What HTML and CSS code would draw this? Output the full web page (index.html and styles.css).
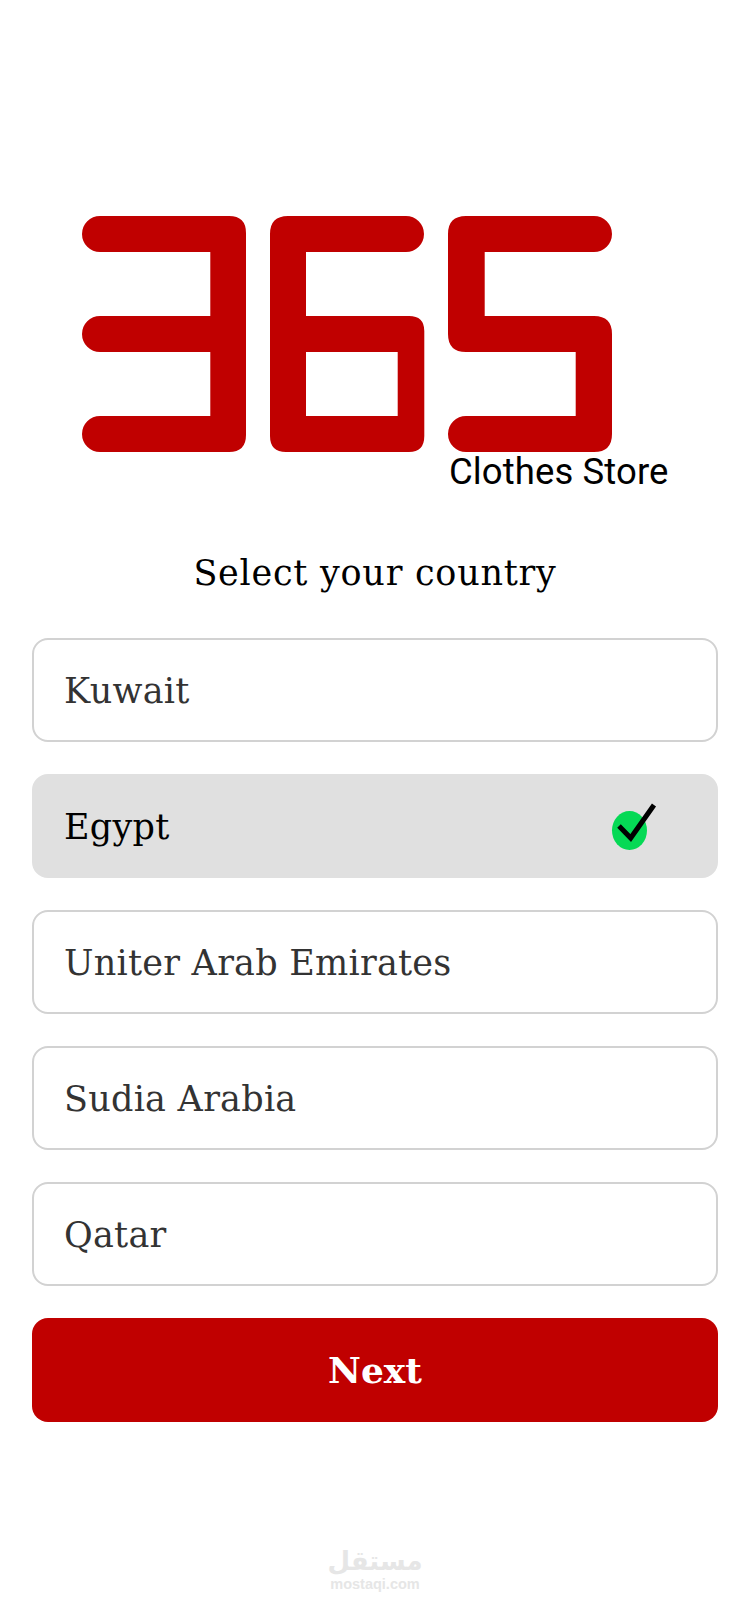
FILE: index.html
```html
<!DOCTYPE html>
<html lang="en">
<head>
<meta charset="utf-8">
<title>Select your country</title>
<link rel="stylesheet" href="styles.css">
</head>
<body>
<main class="page">
  <header class="brand">
    <svg class="logo" viewBox="82 216 530 236" aria-hidden="true">
      <path class="logo-ink" d="M100 216H229Q246 216 246 233V435Q246 452 229 452H100A18 18 0 0 1 100 416H210.3V352H100A18 18 0 0 1 100 316H210.3V252H100A18 18 0 0 1 100 216Z"/>
      <path class="logo-ink" d="M288 216H406A18 18 0 0 1 406 252H306V316H409Q424.3 316 424.3 331V436Q424.3 452 409 452H286Q270 452 270 436V234Q270 216 288 216ZM306 352V416H397.7V352Z"/>
      <path class="logo-ink" d="M466 216H594A18 18 0 0 1 594 252H484.7V316H594Q612 316 612 334V434Q612 452 594 452H466A18 18 0 0 1 466 416H575.7V352H466Q448 352 448 334V234Q448 216 466 216Z"/>
    </svg>
    <p class="tagline">Clothes Store</p>
  </header>
  <h1 class="title">Select your country</h1>
  <ul class="countries">
    <li class="country">Kuwait</li>
    <li class="country country-selected">Egypt
      <svg class="check" viewBox="0 0 44 44" aria-hidden="true">
        <ellipse class="check-dot" cx="17.5" cy="25.5" rx="17.5" ry="19.5"/>
        <path class="check-mark" d="M7 21 18.7 33 42 0"/>
      </svg>
    </li>
    <li class="country">Uniter Arab Emirates</li>
    <li class="country">Sudia Arabia</li>
    <li class="country">Qatar</li>
  </ul>
  <button class="next" type="button">Next</button>
</main>
<div class="watermark">
  <span class="watermark-ar" lang="ar" dir="rtl">مستقل</span>
  <span class="watermark-en">mostaqi.com</span>
</div>
</body>
</html>
```
FILE: styles.css
```css
* { box-sizing: border-box; }
html, body { margin: 0; padding: 0; }
body {
  width: 750px;
  height: 1624px;
  background: #fff;
  position: relative;
  overflow: hidden;
  font-family: "DejaVu Serif", serif;
}
.page { padding: 216px 32px 0; }
.brand { display: flex; flex-direction: column; align-items: flex-start; }
.logo { display: block; width: 530px; height: 236px; margin-left: 50px; }
.logo-ink { fill: #c00000; fill-rule: evenodd; }
.tagline {
  margin: 1px 0 0 417px;
  font: 400 36.5px/38px Roboto, sans-serif;
  letter-spacing: 0.1px;
  color: #000;
  white-space: nowrap;
}
.title {
  margin: 60px 0 43px;
  text-align: center;
  font-weight: 400;
  font-size: 35px;
  line-height: 44px;
  letter-spacing: 0.75px;
  color: #000;
}
.countries {
  list-style: none;
  margin: 0;
  padding: 0;
  display: flex;
  flex-direction: column;
  gap: 32px;
}
.country {
  height: 104px;
  display: flex;
  align-items: center;
  justify-content: space-between;
  padding: 2px 60px 0 30px;
  border: 2px solid #d2d2d2;
  border-radius: 16px;
  font-size: 35px;
  letter-spacing: 0.25px;
  color: #333;
}
.country-selected { background: #e0e0e0; border-color: #e0e0e0; color: #000; }
.check { width: 44px; height: 44px; overflow: visible; }
.check-dot { fill: #05d955; }
.check-mark { fill: none; stroke: #000; stroke-width: 5; }
.next {
  display: block;
  width: 100%;
  height: 104px;
  margin-top: 32px;
  border: 0;
  border-radius: 16px;
  background: #c00000;
  color: #fff;
  font: 700 36px "DejaVu Serif", serif;
}
.watermark {
  position: absolute;
  left: 300px;
  top: 1545px;
  width: 150px;
  display: flex;
  flex-direction: column;
  align-items: center;
  color: #e6e6e6;
}
.watermark-ar { font: 700 26px/33px "DejaVu Sans", sans-serif; }
.watermark-en { font: 700 14.5px/13px "Liberation Sans", sans-serif; }
```
